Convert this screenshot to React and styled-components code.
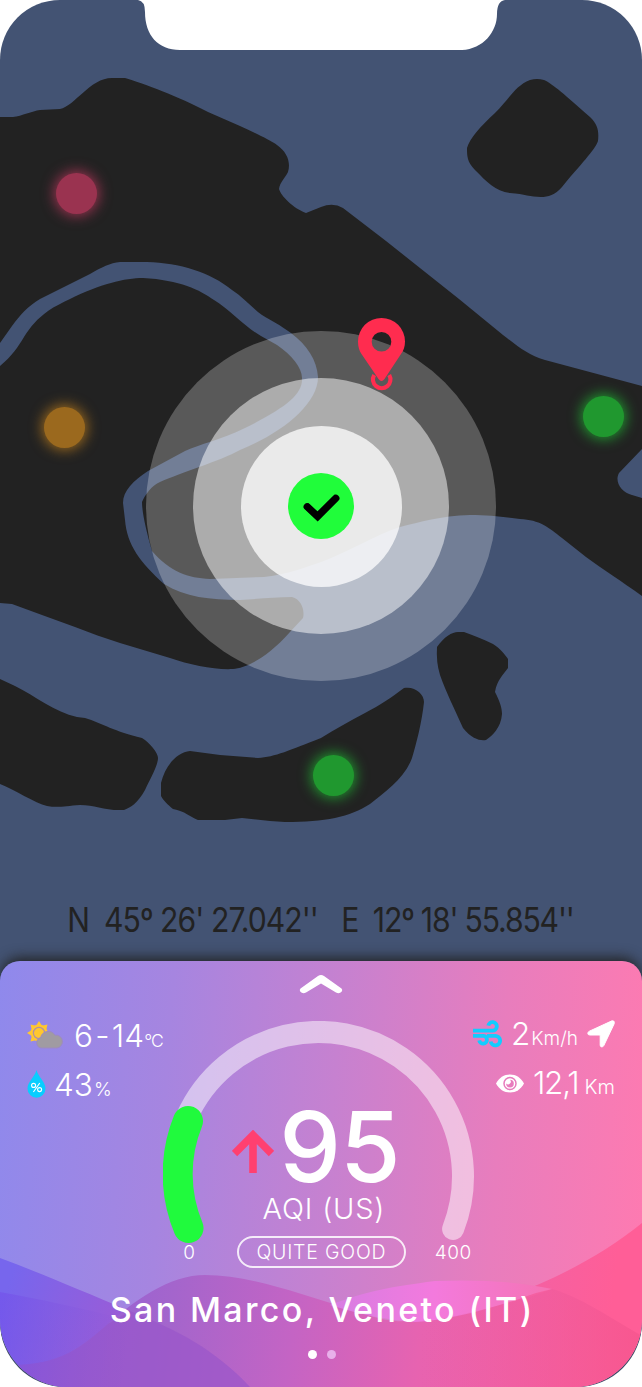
import React from 'react';
import styled, { createGlobalStyle, css } from 'styled-components';

const GlobalStyle = createGlobalStyle`
  * { box-sizing: border-box; }
  body { margin: 0; background: #fff; font-family: Inter, Lato, sans-serif; }
`;

const Device = styled.main`
  position: relative;
  width: 642px;
  height: 1387px;
  display: flex;
  flex-direction: column;
  overflow: hidden;
  background: #435373;
  border-radius: 60px 60px 65px 65px;
`;

const Notch = styled.svg`
  position: absolute;
  top: 0;
  left: 138px;
  z-index: 3;
`;

const MapArea = styled.section`
  position: relative;
  height: 961px;
  display: flex;
  flex-direction: column;
  justify-content: flex-end;
  align-items: center;
`;

const MapDrawing = styled.svg`
  position: absolute;
  inset: 0;
`;

const Station = styled.span`
  position: absolute;
  left: ${(p) => p.$x - 20.5}px;
  top: ${(p) => p.$y - 20.5}px;
  width: 41px;
  height: 41px;
  border-radius: 50%;
  background: ${(p) => p.$color};
  box-shadow: 0 0 13px 2px ${(p) => p.$color};
`;

const Ring = styled.span`
  position: absolute;
  left: ${(p) => 321 - p.$r}px;
  top: ${(p) => 506 - p.$r}px;
  width: ${(p) => p.$r * 2}px;
  height: ${(p) => p.$r * 2}px;
  border-radius: 50%;
  background: ${(p) => p.$color};
`;

const MapIcon = styled.svg`
  position: absolute;
  left: ${(p) => p.$x}px;
  top: ${(p) => p.$y}px;
`;

const Coordinates = styled.div`
  position: relative;
  display: flex;
  width: 564px;
  transform: scaleX(0.9);
  justify-content: space-between;
  margin-bottom: 21px;
  color: #222;
  line-height: 40px;
`;

const Text = styled.span`
  font-size: ${(p) => p.$size}px;
  font-weight: ${(p) => p.$weight || 300};
  letter-spacing: ${(p) => p.$track || 0}px;
  margin-right: ${(p) => -(p.$track || 0)}px;
  word-spacing: ${(p) => p.$word || 0}px;
  white-space: pre;
  ${(p) => p.$line && css`line-height: ${p.$line}px;`}
`;

const Unit = styled(Text)`
  margin-left: 9px;
`;

const Panel = styled.section`
  position: relative;
  height: 426px;
  display: flex;
  flex-direction: column;
  align-items: center;
  color: #fff;
  overflow: hidden;
  border-radius: 20px 20px 68px 68px;
  background: linear-gradient(94deg, #8f89ec 0%, #a685e0 26%, #c681d0 51%, #e87dbd 76%, #ff7ab0 100%);
`;

const PanelShadow = styled.div`
  border-radius: 20px 20px 68px 68px;
  box-shadow: 0 -5px 13px -2px #222;
`;

const Waves = styled.svg`
  position: absolute;
  inset: 0;
`;

const Handle = styled.svg`
  position: relative;
  margin-top: 12px;
`;

const Readings = styled.div`
  position: relative;
  width: 588px;
  margin-top: 27px;
  height: 251px;
  display: flex;
  justify-content: space-between;
`;

const Stats = styled.div`
  width: 136px;
  display: flex;
  flex-direction: column;
  gap: 17px;
  align-items: ${(p) => (p.$end ? 'flex-end' : 'flex-start')};
  margin-top: ${(p) => (p.$end ? -3 : -2)}px;
`;

const Stat = styled.div`
  height: 32px;
  display: flex;
  align-items: center;
  gap: ${(p) => p.$gap}px;
`;

const Value = styled.div`
  display: flex;
  align-items: baseline;
  gap: ${(p) => p.$gap}px;
  line-height: 32px;
  padding-top: ${(p) => p.$drop || 6}px;
`;

const Gauge = styled.div`
  width: 312px;
  display: grid;
  margin-left: -4px;
  & > * { grid-area: 1 / 1; }
`;

const GaugeBody = styled.div`
  display: flex;
  flex-direction: column;
  align-items: center;
  padding-top: 77px;
`;

const Score = styled.div`
  display: flex;
  align-items: flex-start;
  gap: 5px;
  height: 97px;
  margin-right: 5px;
`;

const ScoreArrow = styled.svg`
  margin-top: 32px;
`;

const Scale = styled.div`
  width: 302px;
  display: flex;
  justify-content: space-between;
  align-items: center;
  margin: 13px 0 0 4px;
`;

const Pill = styled.div`
  width: 169px;
  height: 32px;
  display: flex;
  align-items: center;
  justify-content: center;
  border: 2px solid rgba(255, 255, 255, 0.85);
  border-radius: 16px;
`;

const Tick = styled.div`
  width: 38px;
  display: flex;
  justify-content: center;
`;

const Place = styled.h1`
  position: relative;
  margin: 18px 0 0;
  line-height: 40px;
  display: flex;
`;

const Dots = styled.div`
  position: relative;
  display: flex;
  gap: 10px;
  margin: 20px 0 0 2px;
`;

const Dot = styled.span`
  width: 9px;
  height: 9px;
  border-radius: 50%;
  background: ${(p) => (p.$active ? '#fff' : '#e8b0ea')};
`;

const LAND = [
  // northern mainland with the east bank of the canal
  'M0 117H13C22 116 32 111 40 110L60 109C75 106 90 78 112 78H125C142 83 180 97 208 112L240 126C255 133 270 140 277 145C287 152 291 162 288 172C285 178 280 182 279 189C281 196 293 208 306 213L321 207Q333 202 343 208L386 241L459 299L503 335C520 348 528 355 545 360L642 386V449L619 473C614 482 622 493 632 495L642 498V596C620 580 605 571 586 557L562 538C548 527 540 520 520 519C505 517 490 515 470 515C440 516 420 522 400 527C375 535 350 551 321 562C305 567 290 574 264 577L210 579C188 578 170 572 152 551C146 530 142 512 142 502C145 495 152 485 160 482C180 473 220 461 240 450C280 434 318 405 318 377C317 360 307 345 291 333C280 325 272 321 262 315C252 308 243 297 232 290C210 272 180 263 147 262H120C110 263 102 267 90 274L40 299C28 306 20 315 12 326L0 343Z',
  // western land inside the bend
  'M0 366C12 356 18 347 24 337C31 326 37 319 48 311C55 306 62 303 70 299C100 284 125 278 143 278C180 280 200 290 214 300C230 310 245 327 261 336L277 345C292 355 302 368 302 378C303 395 285 408 245 428C220 440 200 444 185 451L148 471C133 481 123 491 123 503L125 520C127 545 140 562 164 584C185 597 210 600 240 600C260 599 275 597 292 597C301 599 305 610 303 618L290 632C265 660 245 668 233 669C215 670 190 665 170 658L120 643C105 638 90 633 75 627L42 615L12 604L0 603Z',
  'M0 679L15 686C35 696 55 712 77 717L85 718C102 723 115 732 142 738C150 743 158 753 158 758C158 766 149 781 145 790C138 803 130 808 124 810C105 811 95 805 80 805C65 806 58 808 47 806C35 803 15 790 0 784Z',
  'M190 751L220 755L258 758C275 757 290 750 321 738C335 729 350 721 365 713C380 705 391 698 404 688C415 686 424 694 424 702C422 722 416 745 412 758C405 778 385 792 370 804C350 817 325 822 285 822L270 821L242 818L225 820L198 820C190 817 185 811 173 809C168 805 163 800 161 796L161 783C165 766 177 752 190 751Z',
  'M437 647C444 637 452 632 458 632H464C475 636 485 640 493 644C500 648 505 655 508 659V668C503 675 497 680 495 692C500 702 502 708 502 714C501 728 492 736 486 740C480 741 472 739 463 728C455 710 446 692 440 675Q436 662 437 647Z',
  'M467 148C470 138 480 127 495 113C510 98 515 86 530 80Q537 78 544 80C553 84 565 95 590 117C598 125 599 131 598 141C595 150 580 165 562 187C555 195 548 197 541 197C530 197 525 194 510 193C495 191 487 182 475 170C467 162 467 156 467 148Z',
];

function Map() {
  return (
    <MapArea>
      <MapDrawing width="642" height="961" viewBox="0 0 642 961">
        {LAND.map((d) => <path key={d} d={d} fill="#222" />)}
      </MapDrawing>
      <Station $x={76.5} $y={193.5} $color="#9a3350" />
      <Station $x={64.5} $y={427.5} $color="#9b691e" />
      <Station $x={603.5} $y={416.5} $color="#20982f" />
      <Station $x={333.5} $y={775.5} $color="#20982f" />
      <Ring $r={175} $color="rgba(255,255,255,.25)" />
      <Ring $r={128} $color="rgba(255,255,255,.5)" />
      <Ring $r={80.5} $color="rgba(255,255,255,.74)" />
      <Ring $r={33} $color="#20fd3a" />
      <MapIcon $x={302} $y={490} width="40" height="34" viewBox="0 0 40 34">
        <path d="M3.8 15.4L15.6 26.4L35.2 6.8" fill="none" stroke="#000" strokeWidth="6.4" />
        <path d="M5.2 16.7L15.6 26.4L33.8 8.2" fill="none" stroke="#000" strokeWidth="7.2" strokeLinecap="round" />
      </MapIcon>
      <MapIcon $x={357} $y={317} width="50" height="76" viewBox="0 0 50 76">
        <path fillRule="evenodd" fill="#ff2c4f" d="M24.5 1A23.4 23.4 0 0 1 48 24.4C48 30 46.5 33.5 44 37L27.5 62Q24.5 66 21.5 62L4.5 37C2.3 33.5 1 30 1 24.4A23.4 23.4 0 0 1 24.5 1ZM24.5 15A9.8 9.8 0 1 0 24.5 34.6A9.8 9.8 0 1 0 24.5 15Z" />
        <path d="M17.2 58A8.7 8.7 0 1 0 32.2 58" fill="none" stroke="#ff2c4f" strokeWidth="4.2" />
      </MapIcon>
      <Coordinates>
        <Text $size={33.5} $weight={400} $track={-1.05}>N  45º 26' 27.042''</Text>
        <Text $size={33.5} $weight={400} $track={-1.3}>E  12º 18' 55.854''</Text>
      </Coordinates>
    </MapArea>
  );
}

function WaveLayer() {
  return (
    <Waves width="642" height="426" viewBox="0 0 642 426">
      <defs>
        <linearGradient id="left" gradientUnits="userSpaceOnUse" x1="0" y1="350" x2="250" y2="426">
          <stop offset="0" stopColor="#7766ed" />
          <stop offset=".5" stopColor="#9d5bd5" />
          <stop offset="1" stopColor="#a85ac5" />
        </linearGradient>
        <linearGradient id="deep" gradientUnits="userSpaceOnUse" x1="0" y1="360" x2="130" y2="380">
          <stop offset="0" stopColor="#7350ea" />
          <stop offset="1" stopColor="#8c58d4" stopOpacity="0" />
        </linearGradient>
        <linearGradient id="main" gradientUnits="userSpaceOnUse" x1="60" y1="0" x2="642" y2="60">
          <stop offset="0" stopColor="#8b60dc" />
          <stop offset=".25" stopColor="#a465cc" />
          <stop offset=".46" stopColor="#c464c4" />
          <stop offset=".68" stopColor="#e763b0" />
          <stop offset="1" stopColor="#ff5e97" />
        </linearGradient>
        <linearGradient id="pink" gradientUnits="userSpaceOnUse" x1="330" y1="0" x2="560" y2="0">
          <stop offset="0" stopColor="#d67de3" />
          <stop offset=".45" stopColor="#f37add" />
          <stop offset="1" stopColor="#f573b0" />
        </linearGradient>
        <linearGradient id="low" gradientUnits="userSpaceOnUse" x1="420" y1="0" x2="642" y2="0">
          <stop offset="0" stopColor="#e05fae" stopOpacity="0" />
          <stop offset="1" stopColor="#f5548c" />
        </linearGradient>
      </defs>
      <path d="M0 297C40 312 80 329 130 350C175 368 215 388 250 426H0Z" fill="url(#left)" />
      <path d="M0 404C55 406 75 390 100 370C135 338 170 314 205 314C250 314 300 333 350 348C380 359 400 365 440 356C520 337 590 304 642 262V426H0Z" fill="url(#main)" />
      <path d="M0 404C60 406 80 387 108 363L130 350C175 368 215 388 250 426H0Z" fill="#9855ca" opacity=".65" />
      <path d="M0 331C40 338 80 347 130 359V426H0Z" fill="url(#deep)" opacity=".6" />
      <path d="M330 344C370 329 390 326 435 320C480 318 520 321 552 328L536 332C500 345 450 360 415 361C385 359 360 353 330 344Z" fill="url(#pink)" />
      <path d="M552 328C580 336 606 354 642 375V426H400V366C460 354 510 344 552 328Z" fill="url(#low)" opacity=".7" />
    </Waves>
  );
}

function WeatherIcon() {
  const rays = Array.from({ length: 8 }, (_, i) => i * 45);
  return (
    <svg width="36" height="28" viewBox="0 0 36 28">
      <g fill="#ffc72f">
        {rays.map((a) => <path key={a} d="M9 4.8L12 0L15 4.8Z" transform={`rotate(${a} 12 12)`} />)}
        <circle cx="12" cy="12" r="8.4" />
      </g>
      <circle cx="12" cy="12" r="5.6" fill="none" stroke="#b091a5" strokeWidth="1.2" />
      <path d="M14.5 27a5.3 5.3 0 0 1-.8-10.4A7.8 7.8 0 0 1 28 14.2A6.2 6.2 0 0 1 30 27Z" fill="#a09ba2" stroke="#9d8ac1" strokeWidth="1" />
    </svg>
  );
}

function HumidityIcon() {
  return (
    <svg width="20" height="28" viewBox="0 0 20 28">
      <path d="M9.5 0C11 7 18.5 11.5 18.5 18.7A9 9 0 0 1 .5 18.7C.5 11.5 8 7 9.5 0Z" fill="#08ceff" />
      <g fill="none" stroke="#fff" strokeWidth="1.1">
        <circle cx="6.6" cy="15.4" r="2" />
        <circle cx="12.6" cy="19.6" r="2" />
        <path d="M12.8 13L6.4 22" />
      </g>
    </svg>
  );
}

function WindIcon() {
  return (
    <svg width="30" height="28" viewBox="0 0 30 28" fill="none" stroke="#12cdff" strokeWidth="3.8">
      <path d="M1 10.7H20.5A4.3 4.3 0 1 0 16.3 5.6" />
      <path d="M1 15.8H11.5A3.9 3.9 0 1 1 7.2 20.4" />
      <path d="M15 15.8H23A4.8 4.8 0 1 1 18.6 21.5" />
    </svg>
  );
}

function HeadingIcon() {
  return (
    <svg width="28" height="28" viewBox="0 0 28 28">
      <path d="M25 .8Q28 .4 27.2 3.7L16.8 25.6Q15.8 27.5 14 26.8Q13.2 26.3 13.2 25V15H2.8Q.8 15 .8 13.3Q.8 12 2.4 11.2Z" fill="#fff" stroke="#fff" strokeWidth="1" />
    </svg>
  );
}

function EyeIcon() {
  return (
    <svg width="28" height="19" viewBox="0 0 28 19">
      <path d="M0 9.5C3 3.8 8 .5 14 .5S25 3.8 28 9.5C25 15.2 20 18.5 14 18.5S3 15.2 0 9.5Z" fill="#fff" />
      <circle cx="14" cy="9.5" r="6" fill="none" stroke="#e87bbd" strokeWidth="1.5" />
      <path d="M14 5.8A3.8 3.8 0 1 1 10.2 9.5A2.2 2.2 0 0 0 14 5.8Z" fill="#e87bbd" />
    </svg>
  );
}

export default function App() {
  return (
    <>
      <GlobalStyle />
      <Device>
        <Notch width="368" height="50" viewBox="0 0 368 50">
          <path d="M0 0Q7 1 7 12C7 35 20 50 42 50H324C345 49 359 32 359 14Q359 1 367 0Z" fill="#fff" />
        </Notch>
        <Map />
        <PanelShadow>
          <Panel>
            <WaveLayer />
            <Handle width="44" height="21" viewBox="0 0 44 21">
              <path d="M1.5 15.5L19 3Q22 .8 25 3L42.5 15.5Q44 17 42.6 18.8Q40.5 21 37 19.6L22 10.6L7 19.6Q3.5 21 1.4 18.8Q0 17 1.5 15.5Z" fill="#fff" />
            </Handle>
            <Readings>
              <Stats>
                <Stat $gap={11}>
                  <WeatherIcon />
                  <Value $gap={0}>
                    <Text $size={31.5} $word={-7} $track={0.2}>6 - 14</Text>
                    <Text $size={17.5} $track={-1}>°C</Text>
                  </Value>
                </Stat>
                <Stat $gap={7}>
                  <HumidityIcon />
                  <Value $gap={1}>
                    <Text $size={31.5}>43</Text>
                    <Text $size={19}>%</Text>
                  </Value>
                </Stat>
              </Stats>
              <Gauge>
                <svg width="312" height="251" viewBox="0 0 312 251" fill="none" strokeLinecap="round">
                  <path d="M11 155.5A144.5 144.5 0 1 1 290.1 208" stroke="#fff" strokeOpacity=".5" strokeWidth="22" />
                  <path d="M25.5 207A140.5 140.5 0 0 1 25 100" stroke="#20fa3d" strokeWidth="30" />
                </svg>
                <GaugeBody>
                  <Score>
                    <ScoreArrow width="42" height="43" viewBox="0 0 42 43">
                      <path d="M21 43V5M2.5 23.5L21 5L39.5 23.5" fill="none" stroke="#ff4070" strokeWidth="7.6" />
                    </ScoreArrow>
                    <Text $size={98} $weight={500} $line={97} $track={-1}>95</Text>
                  </Score>
                  <Unit $size={29} $line={28} $track={0.8}>AQI (US)</Unit>
                  <Scale>
                    <Tick><Text $size={19}>0</Text></Tick>
                    <Pill><Text $size={19.5} $track={0.8}>QUITE GOOD</Text></Pill>
                    <Tick><Text $size={19} $track={0.5}>400</Text></Tick>
                  </Scale>
                </GaugeBody>
              </Gauge>
              <Stats $end>
                <Stat $gap={9}>
                  <WindIcon />
                  <Value $gap={1} $drop={5}>
                    <Text $size={31.5}>2</Text>
                    <Text $size={19}>Km/h</Text>
                  </Value>
                  <HeadingIcon />
                </Stat>
                <Stat $gap={9}>
                  <EyeIcon />
                  <Value $gap={5} $drop={4}>
                    <Text $size={31.5} $track={-1.2}>12,1</Text>
                    <Text $size={20}>Km</Text>
                  </Value>
                </Stat>
              </Stats>
            </Readings>
            <Place>
              <Text $size={34} $weight={450} $track={2.35}>San Marco, Veneto (IT)</Text>
            </Place>
            <Dots>
              <Dot $active />
              <Dot />
            </Dots>
          </Panel>
        </PanelShadow>
      </Device>
    </>
  );
}
